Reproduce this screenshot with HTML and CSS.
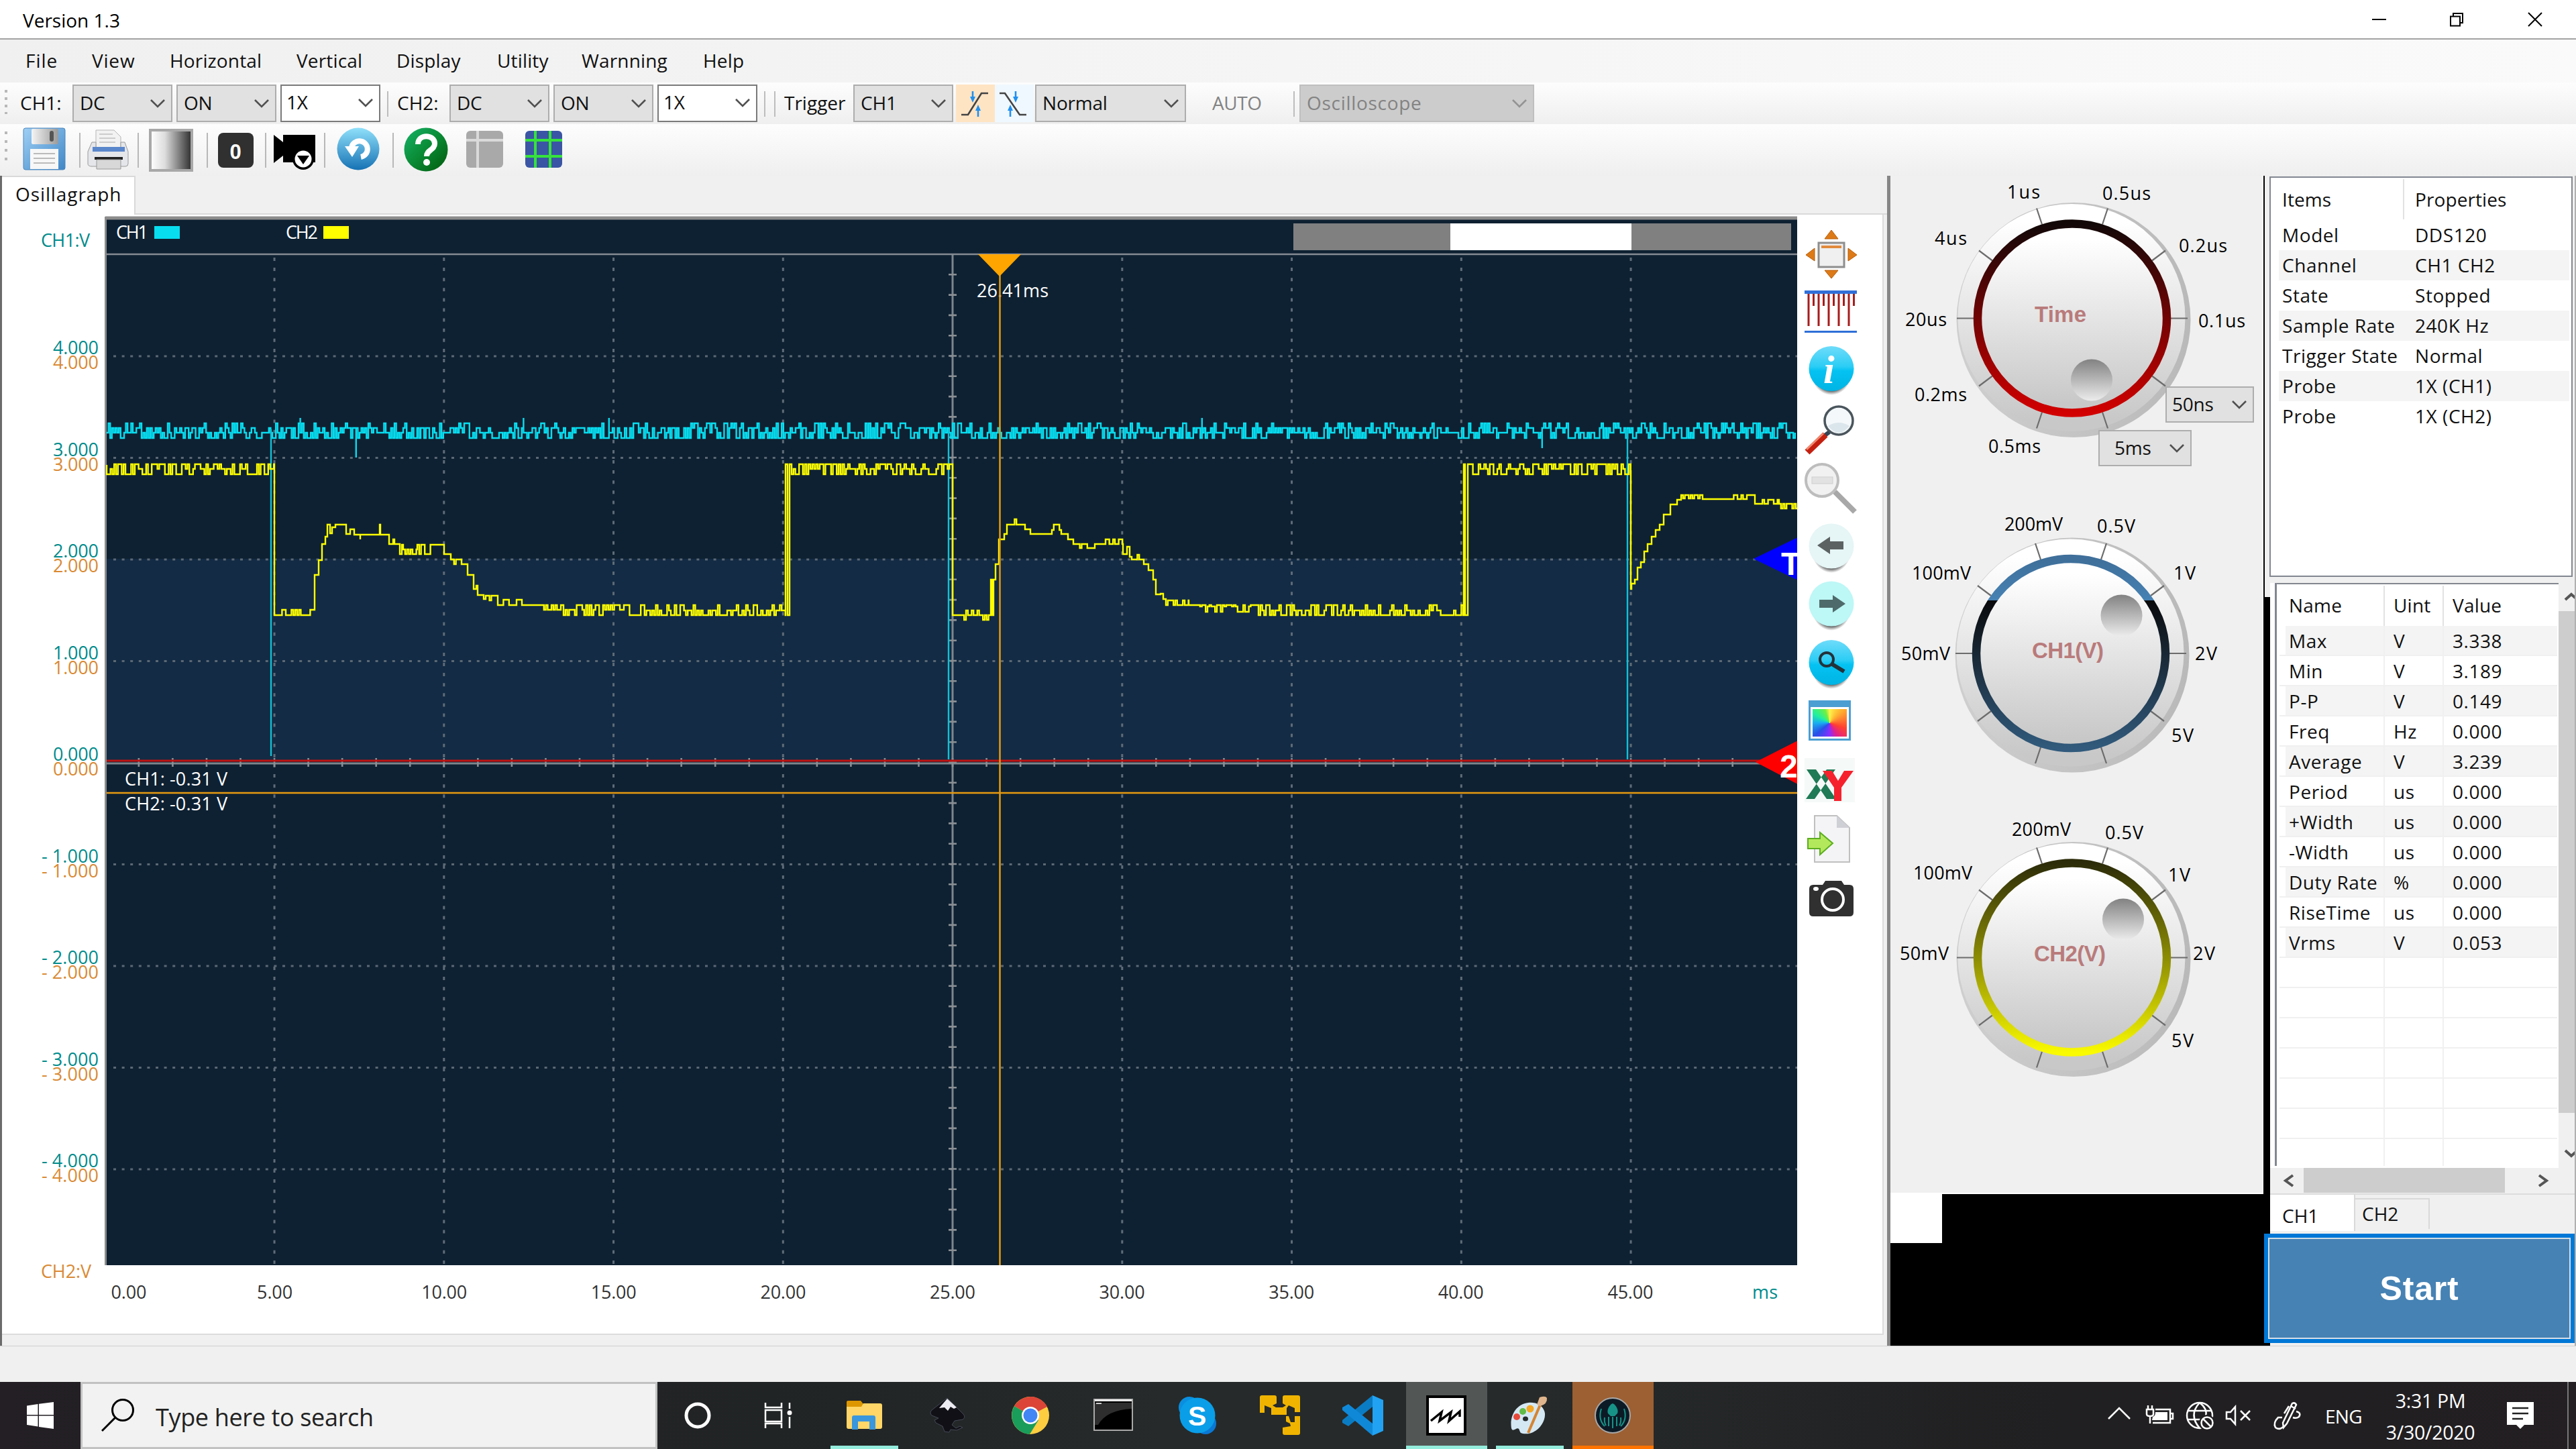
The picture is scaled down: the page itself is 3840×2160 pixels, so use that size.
FILE: index.html
```html
<!DOCTYPE html>
<html lang="en">
<head>
<meta charset="utf-8">
<title>Version 1.3</title>
<link rel="stylesheet" href="styles.css">
</head>
<body>
<svg width="0" height="0" class="defs">
  <defs>
    <symbol id="chev" viewBox="0 0 24 16"><path d="M2 3l10 10L22 3" fill="none" stroke="#505050" stroke-width="2.6"/></symbol>
    <linearGradient id="gFloppy" x1="0" y1="0" x2="1" y2="1"><stop offset="0" stop-color="#9fd0f5"/><stop offset="1" stop-color="#3f86c6"/></linearGradient>
    <linearGradient id="gMetal" x1="0" y1="0" x2="1" y2="0"><stop offset="0" stop-color="#f4f4f4"/><stop offset="1" stop-color="#9a9a9a"/></linearGradient>
    <linearGradient id="gFade" x1="0" y1="0" x2="1" y2="0"><stop offset="0" stop-color="#fff"/><stop offset=".35" stop-color="#ddd"/><stop offset="1" stop-color="#2c2c2c"/></linearGradient>
    <linearGradient id="gBlue" x1="0" y1="0" x2="0" y2="1"><stop offset="0" stop-color="#8fe0fa"/><stop offset="1" stop-color="#1672b4"/></linearGradient>
    <linearGradient id="gGreen" x1="0" y1="0" x2="1" y2="1"><stop offset="0" stop-color="#16b36a"/><stop offset=".5" stop-color="#0a8a34"/><stop offset="1" stop-color="#005a0c"/></linearGradient>
    <linearGradient id="gCyan" x1="0" y1="0" x2="0" y2="1"><stop offset="0" stop-color="#6fdcfa"/><stop offset=".45" stop-color="#2ccdf5"/><stop offset=".55" stop-color="#04c2f2"/><stop offset="1" stop-color="#00b4e4"/></linearGradient>
    <radialGradient id="gShadow"><stop offset=".8" stop-color="#5a5a5a"/><stop offset="1" stop-color="#777" stop-opacity="0"/></radialGradient>
    <linearGradient id="gKnob" x1="0" y1="0" x2="0" y2="1"><stop offset=".08" stop-color="#fff"/><stop offset=".95" stop-color="#c8c8c8"/></linearGradient>
    <linearGradient id="gRim" x1="0" y1="0" x2="1" y2="0"><stop offset="0" stop-color="#cfcfcf"/><stop offset="1" stop-color="#b9b9b9"/></linearGradient>
    <linearGradient id="gDot" x1="0" y1="0" x2="0" y2="1"><stop offset="0" stop-color="#828282"/><stop offset="1" stop-color="#ececec"/></linearGradient>
    <linearGradient id="gRed" x1="0" y1="0" x2="0" y2="1"><stop offset="0" stop-color="#120808"/><stop offset="1" stop-color="#d20000"/></linearGradient>
    <linearGradient id="gSteel" x1="0" y1="0" x2="0" y2="1"><stop offset="0" stop-color="#3f6f9a"/><stop offset=".22" stop-color="#4682b4"/><stop offset=".22" stop-color="#0a0a0c"/><stop offset="1" stop-color="#315a7c"/></linearGradient>
    <linearGradient id="gYel" x1="0" y1="0" x2="0" y2="1"><stop offset="0" stop-color="#2c2c0a"/><stop offset=".5" stop-color="#8c8c04"/><stop offset="1" stop-color="#fafa00"/></linearGradient>
    <g id="knob">
      <ellipse cx="2" cy="2.5" rx="174.500" ry="175" fill="url(#gRim)"/>
      <circle cx="-1" cy="-1" r="169.500" fill="url(#gKnob)"/>
      <circle r="141" fill="url(#gKnob)"/>
      <path d="M147 0H172M-147 0H-172M119 -86L139 -101M119 86L139 101M-119 -86L-139 -101M-119 86L-139 101M45 -140L53 -164M-45 -140L-53 -164M45 140L53 164M-45 140L-53 164" stroke="#6c6c6c" stroke-width="2.2"/>
    </g>
  </defs>
</svg>

<header class="titlebar">
  <span>Version 1.3</span>
  <svg class="winbtns" viewBox="3520 0 320 58"><g fill="none" stroke="#000" stroke-width="2"><path d="M3536 29h21"/><path d="M3653 24.500h14v14h-14zM3657 24v-4h14v14h-4"/><path d="M3769 19l20 20M3789 19l-20 20"/></g></svg>
</header>

<nav class="menu">
  <span>File</span><span>View</span><span>Horizontal</span><span>Vertical</span><span>Display</span><span>Utility</span><span>Warnning</span><span>Help</span>
</nav>

<div class="bar bar1">
  <i class="grip"></i>
  <span class="lbl ch">CH1:</span>
  <div class="combo w149">DC<svg><use href="#chev"/></svg></div>
  <div class="combo w149">ON<svg><use href="#chev"/></svg></div>
  <div class="combo w149 edit">1X<svg><use href="#chev"/></svg></div>
  <i class="sep s1"></i>
  <span class="lbl ch">CH2:</span>
  <div class="combo w149">DC<svg><use href="#chev"/></svg></div>
  <div class="combo w149">ON<svg><use href="#chev"/></svg></div>
  <div class="combo w149 edit">1X<svg><use href="#chev"/></svg></div>
  <i class="sep s1"></i><i class="sep s2"></i>
  <span class="lbl trig">Trigger</span>
  <div class="combo w149 last">CH1<svg><use href="#chev"/></svg></div>
  <div class="edge rise"><svg viewBox="0 0 58 56"><path d="M8 45h10L38 13h10" fill="none" stroke="#444" stroke-width="2.6"/><path d="M25 10v10M33 48V38" stroke="#2090f0" stroke-width="2.600"/><path d="M21 18h8l-4 9zM29 39h8l-4-9z" fill="#2090f0"/></svg></div>
  <div class="edge fall"><svg viewBox="0 0 58 56"><path d="M7 13h8l22 32h10" fill="none" stroke="#444" stroke-width="2.6"/><path d="M31 10v10M23 48V38" stroke="#2090f0" stroke-width="2.600"/><path d="M27 18h8l-4 9zM19 39h8l-4-9z" fill="#2090f0"/></svg></div>
  <div class="combo w225">Normal<svg><use href="#chev"/></svg></div>
  <span class="lbl auto">AUTO</span>
  <i class="sep s3"></i>
  <div class="combo w350 off">Oscilloscope<svg><use href="#chev"/></svg></div>
</div>

<div class="bar bar2">
  <svg class="tools" viewBox="0 185 860 77">
    <g fill="#b8b8b8"><path d="M7 196h4v4h-4zM7 209h4v4h-4zM7 222h4v4h-4zM7 235h4v4h-4z"/><path d="M118 198h2v52h-2zM205 198h2v52h-2zM308 198h2v52h-2zM395 198h2v52h-2zM483 198h2v52h-2zM585 198h2v52h-2z"/></g>
    <g><rect x="35" y="191" width="62" height="62" rx="3" fill="url(#gFloppy)" stroke="#4a86bd"/><rect x="47" y="192" width="40" height="23" rx="2" fill="url(#gMetal)"/><rect x="74" y="195" width="6" height="16" rx="3" fill="#555"/><path d="M45 222h42v30H45z" fill="#f7f7f7"/><path d="M50 229h32M50 236h32M50 243h32" stroke="#bbb" stroke-width="2"/></g>
    <g><path d="M143 194h27l10 10v18h-37z" fill="#f2f2f2" stroke="#b5b5b5"/><path d="M148 200h20M148 206h24M148 212h24" stroke="#ccc" stroke-width="2"/><path d="M137 212h6v8h37v-8h6l5 14v18q0 4-4 4h-50q-6 0-6-4v-18z" fill="#e4e6ea" stroke="#9a9a9a"/><path d="M138 219h48v7h-48z" fill="#5a86cc"/><path d="M141 234h42v4h-42z" fill="#222"/><path d="M144 238h36v14h-36z" fill="#d8d8d8" stroke="#999"/></g>
    <rect x="224" y="194" width="62" height="60" fill="url(#gFade)" stroke="#a8a8a8" stroke-width="4"/>
    <rect x="325" y="198" width="53" height="52" rx="8" fill="#303030"/><text x="342.500" y="237" class="ico" font-size="31" fill="#fff">0</text>
    <g><path d="M408 201l14 11v-11h48v41h-48v-10l-14 11z"/><circle cx="452" cy="237" r="16"/><circle cx="452" cy="237" r="12.500" fill="#fff"/><path d="M443 232h18l-9 13z"/></g>
    <g><circle cx="534" cy="222" r="31.500" fill="url(#gBlue)"/><path d="M524 220a12 12 0 1 1 14 14" fill="none" stroke="#fff" stroke-width="8"/><path d="M514 218h21l-10 16z" fill="#fff"/></g>
    <g><circle cx="635" cy="223" r="32.500" fill="url(#gGreen)"/><path d="M623 215c0-16 25-15 25-1 0 10-12 9-12 19" fill="none" stroke="#fff" stroke-width="8"/><circle cx="636" cy="242" r="5" fill="#fff"/></g>
    <g><rect x="695" y="195" width="55" height="55" rx="6" fill="#a9a9a9"/><path d="M712 195v55M695 209h55" stroke="#dadada" stroke-width="4"/></g>
    <g><rect x="783" y="195" width="55" height="55" rx="6" fill="#3b55a5"/><path d="M798 195v55M820 195v55M783 209h55M783 233h55" stroke="#35e23b" stroke-width="4"/></g>
  </svg>
</div>

<main class="work">
  <section class="scope">
    <div class="tabs"><span class="tab">Osillagraph</span></div>
    <div class="page">
      <svg class="plot" viewBox="4 320 2675 1668" id="plot">
        <rect x="157" y="323" width="2522" height="1563" fill="#0e2132"/>
        <path d="M157 325h2522" stroke="#8c8c8c" stroke-width="5"/>
        <path d="M157.500 323v1563" stroke="#8c8c8c" stroke-width="3"/>
        <rect x="159" y="833" width="2520" height="302" fill="#132b44"/>
        <g id="grid"></g>
        <path d="M159 379h2520" stroke="#858b92" stroke-width="2.500"/>
        <g class="t" fill="#fff">
          <text x="173" y="356" textLength="48">CH1</text><rect x="230" y="337" width="38" height="19" fill="#08ddf0"/>
          <text x="426" y="356" textLength="48">CH2</text><rect x="482" y="337" width="38" height="19" fill="#ff0"/>
        </g>
        <path d="M1928 333h742v40h-742z" fill="#808080"/><path d="M2162 333h270v40h-270z" fill="#fff"/>
        <path id="ch1" class="tr" stroke="#08ddf0"/>
        <path d="M404 640V1127M1414 640V1132M2426 640V1132" class="tr" stroke="#12c0d6"/>
        <path id="ch2" class="tr" stroke="#ff0"/>
        <path d="M159 1134h2520" stroke="#c01212" stroke-width="3"/>
        <g class="t" fill="#fff"><text x="186" y="1171" textLength="153">CH1: -0.31 V</text><text x="186" y="1208" textLength="153">CH2: -0.31 V</text><text x="1456" y="443" textLength="107">26.41ms</text></g>
        <path d="M159 1182h2520M1490.500 379V1886" stroke="#e69a10" stroke-width="2.500"/>
        <path d="M1458 379h64l-32 33z" fill="#ffa500"/>
        <path d="M2680 801v64l-66-32z" fill="#00f"/><path d="M2680 1104v65l-63-33z" fill="#f00"/>
        <g class="mk" fill="#fff"><text x="2655" y="857">T</text><text x="2653" y="1159">2</text></g>
        <g class="t" id="labels"><text x="61" y="368" fill="#008b8b" textLength="73">CH1:V</text><text x="61" y="1905" fill="#d98a35" textLength="75">CH2:V</text><text x="2612" y="1936" fill="#008b8b" textLength="38">ms</text></g>
      </svg>
      <div class="icons">
        <svg viewBox="2690 340 78 78"><path d="M2730 343l10 13h-20zM2730 415l10-12h-20zM2692 380l13-10v19zM2768 380l-13-10v19z" fill="#dd7a18" stroke="#b85c08"/><rect x="2711" y="362" width="38" height="36" fill="#f0f0f0" stroke="#8e8e8e" stroke-width="3"/><path d="M2715 368h30" stroke="#e08a3c" stroke-width="4"/></svg>
        <svg viewBox="2690 428 78 78"><path d="M2690 435.500h78" stroke="#2f6fd8" stroke-width="5"/><path d="M2690 494.500h78" stroke="#2f6fd8" stroke-width="3"/><path d="M2696 438v48M2711 438v48M2726 438v48M2741 438v48M2756 438v48M2703.500 438v18M2718.500 438v18M2733.500 438v18M2748.500 438v18M2763.500 438v18" stroke="#a81c1c" stroke-width="3"/></svg>
        <svg viewBox="2690 515 78 78"><ellipse cx="2730" cy="556" rx="30" ry="33" fill="url(#gShadow)"/><circle cx="2730" cy="549.500" r="33.500" fill="url(#gCyan)"/><text x="2718" y="571" class="serif" fill="#fff">i</text></svg>
        <svg viewBox="2690 600 78 78"><path d="M2727 641l-8 6" stroke="#345" stroke-width="6"/><path d="M2694 671l27-26" stroke="#c42010" stroke-width="10"/><path d="M2693 667l25-24" stroke="#f08a70" stroke-width="3"/><circle cx="2741" cy="624" r="21" fill="#f4f8fa" stroke="#4a555c" stroke-width="3.500"/><path d="M2725 632q16-10 32 0-16 20-32 0z" fill="#dbe6ec"/></svg>
        <svg viewBox="2690 688 78 78"><path d="M2735 731l30 30" stroke="#a8a8a8" stroke-width="8"/><circle cx="2716" cy="714" r="24" fill="#f1f1f1" stroke="#bdbdbd" stroke-width="4"/><rect x="2701" y="709" width="31" height="10" fill="#e2e2e2" stroke="#cfcfcf"/></svg>
        <svg viewBox="2690 776 78 78"><ellipse cx="2730" cy="819" rx="29" ry="33" fill="url(#gShadow)"/><circle cx="2730" cy="812" r="33.500" fill="#e6f5f5"/><path d="M2709 811l19-13v7h20v12h-20v7z" fill="#5c6262"/></svg>
        <svg viewBox="2690 864 78 78"><ellipse cx="2730" cy="906" rx="29" ry="33" fill="url(#gShadow)"/><circle cx="2730" cy="899" r="33.500" fill="#bdf7f6"/><path d="M2751 899l-19-13v7h-20v12h20v7z" fill="#4f6a6a"/></svg>
        <svg viewBox="2690 952 78 78"><ellipse cx="2730" cy="993" rx="30" ry="33" fill="url(#gShadow)"/><circle cx="2730" cy="986.500" r="33.500" fill="url(#gCyan)"/><circle cx="2723" cy="982" r="10" fill="none" stroke="#23323a" stroke-width="4"/><path d="M2731 989l18 11" stroke="#23323a" stroke-width="6"/></svg>
        <div class="palette"><i></i></div>
        <svg viewBox="2690 1122 78 78"><rect x="2690" y="1126" width="75" height="66" fill="#f5f9f8"/><path d="M2693 1143h14l30 44h-14zM2736 1143h-13l-31 44h13z" fill="#1f7a55"/><path d="M2717 1145h14l9 15 9-15h14l-18 25v20h-11v-20z" fill="#f5222d"/></svg>
        <svg viewBox="2690 1213 78 78"><path d="M2705 1216h33l19 18v51h-52z" fill="#f4f4f6" stroke="#c0c0c0" stroke-width="2"/><path d="M2738 1216v18h19z" fill="#cfcfd6"/><path d="M2695 1250h18v-9l19 16-19 17v-9h-18z" fill="#b4e85c" stroke="#5cae20" stroke-width="2"/></svg>
        <svg viewBox="2690 1301 78 78"><path d="M2697 1325q0-6 6-6h14l4-6h24l4 6h8q6 0 6 6v35q0 6-6 6h-54q-6 0-6-6z" fill="#303030"/><circle cx="2732" cy="1341" r="16" fill="none" stroke="#fff" stroke-width="4"/><ellipse cx="2707" cy="1325" rx="4" ry="3" fill="#fff"/></svg>
      </div>
    </div>
  </section>

  <section class="knobs">
    <div class="panel">
      <svg viewBox="2818 262 556 1518">
        <use href="#knob" x="3089" y="474.500"/><circle cx="3089" cy="474.500" r="141" fill="none" stroke="url(#gRed)" stroke-width="12.500"/><circle cx="3118" cy="566.500" r="31" fill="url(#gDot)"/>
        <use href="#knob" x="3087" y="974"/><circle cx="3087" cy="974" r="141" fill="none" stroke="url(#gSteel)" stroke-width="12.500"/><circle cx="3162.500" cy="917.500" r="31" fill="url(#gDot)"/>
        <use href="#knob" x="3089" y="1427.500"/><circle cx="3089" cy="1427.500" r="141" fill="none" stroke="url(#gYel)" stroke-width="12.500"/><circle cx="3165" cy="1370.500" r="31" fill="url(#gDot)"/>
        <g class="kn"><text x="3033" y="480" textLength="77">Time</text><text x="3029" y="981" textLength="107">CH1(V)</text><text x="3032" y="1433" textLength="107">CH2(V)</text></g>
        <g class="t">
          <text x="2992" y="296" textLength="49">1us</text><text x="3134" y="298" textLength="72">0.5us</text><text x="3248" y="376" textLength="72">0.2us</text><text x="2884" y="365" textLength="48">4us</text><text x="2840" y="486" textLength="62">20us</text><text x="3277" y="488" textLength="70">0.1us</text><text x="2854" y="598" textLength="78">0.2ms</text><text x="2964" y="675" textLength="78">0.5ms</text>
          <text x="2988" y="791" textLength="87">200mV</text><text x="3126" y="794" textLength="57">0.5V</text><text x="2850" y="864" textLength="88">100mV</text><text x="3240" y="864" textLength="33">1V</text><text x="2834" y="984" textLength="73">50mV</text><text x="3272" y="984" textLength="33">2V</text><text x="3237" y="1106" textLength="33">5V</text>
          <text x="2999" y="1246" textLength="88">200mV</text><text x="3138" y="1251" textLength="57">0.5V</text><text x="2852" y="1311" textLength="88">100mV</text><text x="3232" y="1314" textLength="33">1V</text><text x="2832" y="1431" textLength="73">50mV</text><text x="3269" y="1431" textLength="33">2V</text><text x="3237" y="1561" textLength="33">5V</text>
        </g>
      </svg>
      <div class="combo over ns">50ns<svg><use href="#chev"/></svg></div>
      <div class="combo over ms">5ms<svg><use href="#chev"/></svg></div>
    </div>
    <div class="void"><i></i></div>
  </section>

  <aside class="side">
    <div class="props">
      <div class="r h"><span>Items</span><span>Properties</span></div>
      <div class="r"><span>Model</span><span>DDS120</span></div>
      <div class="r alt"><span>Channel</span><span>CH1 CH2</span></div>
      <div class="r"><span>State</span><span>Stopped</span></div>
      <div class="r alt"><span>Sample Rate</span><span>240K Hz</span></div>
      <div class="r"><span>Trigger State</span><span>Normal</span></div>
      <div class="r alt"><span>Probe</span><span>1X (CH1)</span></div>
      <div class="r"><span>Probe</span><span>1X (CH2)</span></div>
    </div>
    <div class="meas">
      <div class="list">
        <div class="m h"><span>Name</span><span>Uint</span><span>Value</span></div>
        <div class="m alt"><span>Max</span><span>V</span><span>3.338</span></div>
        <div class="m"><span>Min</span><span>V</span><span>3.189</span></div>
        <div class="m alt"><span>P-P</span><span>V</span><span>0.149</span></div>
        <div class="m"><span>Freq</span><span>Hz</span><span>0.000</span></div>
        <div class="m alt"><span>Average</span><span>V</span><span>3.239</span></div>
        <div class="m"><span>Period</span><span>us</span><span>0.000</span></div>
        <div class="m alt"><span>+Width</span><span>us</span><span>0.000</span></div>
        <div class="m"><span>-Width</span><span>us</span><span>0.000</span></div>
        <div class="m alt"><span>Duty Rate</span><span>%</span><span>0.000</span></div>
        <div class="m"><span>RiseTime</span><span>us</span><span>0.000</span></div>
        <div class="m alt"><span>Vrms</span><span>V</span><span>0.053</span></div>
        <div class="m"><span></span><span></span><span></span></div>
        <div class="m"><span></span><span></span><span></span></div>
        <div class="m"><span></span><span></span><span></span></div>
        <div class="m"><span></span><span></span><span></span></div>
        <div class="m"><span></span><span></span><span></span></div>
        <div class="m"><span></span><span></span><span></span></div>
        <div class="m"><span></span><span></span><span></span></div>
      </div>
      <svg class="vs" viewBox="3815 869 24 872"><path fill="#cdcdcd" d="M3815 911h24v748h-24z"/><path d="M3825 894l9-8 9 8M3825 1715l9 8 9-8" fill="none" stroke="#555" stroke-width="4"/></svg>
    </div>
    <svg class="hs" viewBox="3392 1741 447 38"><path fill="#cdcdcd" d="M3435 1741h300v37h-300z"/><path d="M3419 1752l-11 8 11 8M3786 1752l11 8-11 8" fill="none" stroke="#555" stroke-width="4"/></svg>
    <div class="chtabs"><span class="on">CH1</span><span>CH2</span></div>
    <button class="start">Start</button>
  </aside>
</main>
<div class="status"></div>

<footer class="taskbar">
  <div class="win"><svg viewBox="0 0 40 40"><path d="M0 5.500L16.500 3v16H0zM18 2.800L40 0v19H18zM0 20.500h16.500v16L0 34zM18 20.500h22V40l-22-3z" fill="#fff"/></svg></div>
  <div class="search"><svg viewBox="0 0 50 50"><circle cx="32" cy="17" r="15.500" fill="none" stroke="#000" stroke-width="3"/><path d="M21 28L1 48" stroke="#000" stroke-width="3"/></svg><span>Type here to search</span></div>
  <svg class="apps" viewBox="980 2060 1500 100">
    <circle cx="1040" cy="2110" r="17" fill="none" stroke="#fff" stroke-width="5"/>
    <g fill="none" stroke="#fff" stroke-width="2.500"><path d="M1141 2091v7h24v-7M1141 2102h24v17h-24zM1141 2129v-7h24v7M1177 2091v9M1177 2112v17"/></g><circle cx="1177" cy="2106" r="3.500" fill="#fff"/>
    <g><path d="M1262 2090q0-2 2-2h19l4 5v10h-25z" fill="#dd9700"/><path d="M1262 2097h22l3-5h25q3 0 3 3v32q0 3-3 3h-47q-3 0-3-3z" fill="#ffd667"/><path d="M1270 2131v-18q0-3 3-3h29q3 0 3 3v18h-9v-12h-17v12z" fill="#3a96dd"/></g>
    <g><path d="M1412 2084l24 24q4 5-1 8l-12 2-4 6 6 5 6-3 4 2-9 4-9-1-2 4-7-1-3-8-10-5-2-4 6-3-10-4q-4-4 0-8z" fill="#101016" stroke="#444956"/><path d="M1412 2085l14 13-4 2-5-3-4 6-5-5-8 1z" fill="#ececf2"/></g>
    <g><circle cx="1536" cy="2110" r="28" fill="#ffcd40"/><path d="M1536 2110L1512 2096a28 28 0 0 1 49 1z" fill="#db4437"/><path d="M1512 2096a28 28 0 0 0 23 42l13-21-12-7z" fill="#1a9d5a"/><circle cx="1536" cy="2110" r="13" fill="#fff"/><circle cx="1536" cy="2110" r="10.500" fill="#4285f4"/></g>
    <g><path d="M1631 2086h57v46h-57z" fill="#000" stroke="#a9a9a9" stroke-width="2"/><path d="M1632 2086h55v3h-55z" fill="#e8e8e8"/><path d="M1632 2091h55v9q-38 2-50 24h-5z" fill="#2e2e2e"/><path d="M1634 2092h8" stroke="#ccc" stroke-width="2"/></g>
    <g><circle cx="1773" cy="2098" r="16" fill="#0a8fe0"/><circle cx="1797" cy="2122" r="16" fill="#0a78d4"/><circle cx="1785" cy="2110" r="26.500" fill="#0a9ee8"/><text x="1771" y="2125" class="ico" font-size="41" fill="#fff">S</text></g>
    <path d="M1881 2080h19q3 0 3 3v9l-6 3 5 3h10l5-3-5-3v-9q0-3 3-3h20q3 0 3 3v22h-8v-6l-9-4-3 4v10h-23v-10l-10-4v11h-7v-23q0-3 3-3zM1917 2111h4l3 9h6v-9h8v25q0 3-3 3h-20q-3 0-3-3v-8l12-2-1-4-6-3z" fill="#f0b400"/>
    <g><path d="M2046 2080l16 7v46l-16 7z" fill="#22a2f2"/><path d="M2046 2080v17l-36 29-9-5v-4z" fill="#0a7cc4"/><path d="M2046 2140v-18l-36-29-9 5v4z" fill="#1088d8"/></g>
    <path d="M2096 2060h121v100h-121z" fill="#525655"/><path d="M2128 2082h56v56h-56z" fill="#fff" stroke="#000" stroke-width="4"/><path d="M2133 2109l15-4-4 13 20-13-6 13 20-13-1 5" fill="none"/><path d="M2133 2118l16-13-3 13 17-13-3 13 16-14v8" fill="none" stroke="#000" stroke-width="3.500"/>
    <g><path d="M2278 2091c-18 2-28 20-25 38 2 7 8-2 11 1 2 3 1 6 6 7 18 3 34-14 33-30-1-10-12-18-25-16z" fill="#d4e8f4"/><ellipse cx="2274" cy="2115" rx="4" ry="3.500" fill="#252a2a"/><circle cx="2261" cy="2112" r="5" fill="#e84a3a"/><circle cx="2270" cy="2104" r="5" fill="#62bb46"/><circle cx="2281" cy="2100" r="5.500" fill="#f5a623"/><path d="M2296 2094l-18 42" stroke="#d58432" stroke-width="4"/><path d="M2291 2094l4-11q9-3 11 1 1 9-10 12z" fill="#e0b48c"/></g>
    <path d="M2344 2060h121v100h-121z" fill="#9c6033"/><circle cx="2404" cy="2110" r="26" fill="#0c1a26" stroke="#a8a8a8" stroke-width="2"/><path d="M2404 2092c-6 3-9 11-7 15l4 4h6l4-4c2-4-1-12-7-15z" fill="#179287"/><path d="M2398 2112v14M2410 2112v14M2392 2113q-1 7 2 12M2416 2113q1 7-2 12M2387 2100q-5 16 5 26M2421 2100q5 16-5 26M2404 2112v17" fill="none" stroke="#179287" stroke-width="2"/>
    <path d="M1238 2155h101v5h-101zM2096 2155h121v5h-121zM2230 2155h101v5h-101z" fill="#93ecdc"/><path d="M2344 2155h121v5h-121z" fill="#ff7300"/>
  </svg>
  <div class="tray">
    <svg class="trayic" viewBox="3140 2060 295 100"><g fill="none" stroke="#fff" stroke-width="2.500">
      <path d="M3143 2115l16-16 16 16"/>
      <path d="M3213 2101h22v20h-26M3235 2107h4v8h-4M3202 2095v5M3208 2095v5M3200 2101h10v7q0 3-5 3t-5-3zM3205 2111v11"/><path d="M3213 2105h18v12h-23l1-5q4-1 4-7z" fill="#fff" stroke="none"/>
      <circle cx="3279" cy="2110" r="19"/><path d="M3262 2103h35M3262 2116h20M3279 2091q-17 18 0 38M3279 2091q12 9 9 20"/><circle cx="3290" cy="2121" r="12" fill="#211f21" stroke="none"/><circle cx="3290" cy="2121" r="8.500"/><path d="M3284 2115l12 12"/>
      <path d="M3319 2105h6l7-8v26l-7-8h-6zM3340 2103l14 14M3354 2103l-14 14"/>
      <path d="M3403 2121l14-29q4-2 6 2l-14 28-5 6zM3415 2096l7 4M3405 2107l7-11M3402 2113h-6q-8 8-4 15 7 5 13-3M3423 2104q8 2 4 8-4 3-9 1"/></g></svg>
    <span class="eng">ENG</span>
    <span class="clock"><b>3:31 PM</b><b>3/30/2020</b></span>
    <svg class="note" viewBox="0 0 40 40"><path d="M0 0h40v34H26l-6 6-6-6H0z" fill="#fff"/><path d="M8 9h24M8 17h24M8 25h16" stroke="#222" stroke-width="2.500"/></svg>
    <i class="peek"></i>
  </div>
</footer>
<script src="scope.js"></script>
</body>
</html>
```
FILE: styles.css
```css
* { box-sizing: border-box; }
body { margin: 0; width: 3840px; height: 2160px; overflow: hidden; background: #f0f0f0; font-family: "Open Sans", "Noto Sans", sans-serif; font-size: 28px; color: #111; display: flex; flex-direction: column; }
svg { display: block; flex: none; }
.defs { position: absolute; }
text { font-family: "Open Sans", sans-serif; }

.titlebar { height: 59px; background: #fff; border-bottom: 2px solid #a3a3a3; display: flex; align-items: center; justify-content: space-between; padding-left: 34px; color: #000; }
.titlebar span { padding-top: 2px; }
.winbtns { width: 320px; height: 58px; }

.menu { height: 64px; padding: 0 0 2px 38px; background: linear-gradient(90deg, #f0f0f0, #fafafa); display: grid; grid-template-columns: 99px 116px 189px 149px 150px 126px 181px 100px; align-items: center; letter-spacing: .15px; }
.menu span:nth-child(1) { letter-spacing: 1px; }
.menu span:nth-child(2) { letter-spacing: .8px; }

.bar { background: linear-gradient(#fdfdfd, #efefef); display: flex; }
.bar1 { height: 62px; padding-top: 3px; }
.bar2 { height: 77px; }
.grip { width: 4px; height: 36px; margin: 8px 19px 0 7px; background: repeating-linear-gradient(#b8b8b8 0 4px, transparent 4px 11px); }
.lbl { line-height: 54px; white-space: nowrap; }
.ch { width: 78px; }
.trig { width: 103px; }
.auto { width: 121px; color: #838383; letter-spacing: -.4px; }
.combo { height: 56px; border: 2px solid #adadad; background: #e1e1e1; display: flex; align-items: center; justify-content: space-between; padding: 0 8px 2px 9px; margin-right: 6px; letter-spacing: -.2px; }
.combo svg { width: 24px; height: 16px; margin-top: 2px; }
.edit { background: #fff; border-color: #7a7a7a; margin-right: 10px; padding: 0 8px 4px 7px; }
.w149 { width: 149px; }
.last { margin-right: 4px; }
.w225 { width: 225px; margin-right: 39px; margin-left: 2px; }
.w350 { width: 350px; }
.off { background: #ccc; border-color: #bfbfbf; color: #838383; letter-spacing: .7px; }
.off svg { opacity: .45; }
.sep { width: 2px; height: 38px; margin-top: 10px; background: #bdbdbd; }
.s1 { margin-right: 13px; }
.s2 { margin-right: 13px; }
.s3 { margin-right: 7px; }
.edge { width: 58px; height: 56px; }
.edge svg { width: 58px; height: 56px; }
.rise { background: #ffe4c4; }
.fall { background: #f0f8ff; }
.tools { width: 860px; height: 77px; }
.ico { font-family: "Liberation Sans", sans-serif; font-weight: bold; }
.serif { font: italic bold 60px "Liberation Serif", serif; }

.work { height: 1744px; display: flex; }
.scope { width: 2813px; border-left: 3px solid #6b6b6b; display: flex; flex-direction: column; }
.tabs { height: 58px; border-bottom: 2px solid #d9d9d9; }
.tab { display: block; width: 199px; height: 58px; background: #fff; border: 2px solid #d9d9d9; border-width: 2px 2px 0 0; padding-left: 20px; line-height: 50px; letter-spacing: .9px; }
.page { width: 2805px; height: 1670px; background: #fff; border: 2px solid #dcdcdc; border-top: 0; border-left: 0; display: flex; padding-left: 1px; }
.plot { width: 2675px; height: 1668px; }
.t text { font-size: 27px; }
.mk text { font-family: "Liberation Sans", sans-serif; font-weight: bold; font-size: 48px; }
.kn text { font-family: "Liberation Sans", sans-serif; font-weight: bold; font-size: 33px; fill: #b97b7b; }
.tr { fill: none; stroke-width: 2.4; }
.icons { width: 78px; margin-left: 11px; padding-top: 20px; display: flex; flex-direction: column; gap: 9.5px; }
.icons svg { width: 78px; height: 78px; }
.palette { width: 63px; height: 60px; margin: 4px 0 12px 6px; border: 3px solid #4b9ed2; border-top: 10px solid #4b9ed2; background: #fff; padding: 3px; }
.palette i { display: block; height: 41px; background: conic-gradient(from 0deg, #fff24a, #ffb030 45deg, #ff4030 110deg, #e0208c 150deg, #8a2cff 180deg, #2850e8 230deg, #18b0f0 270deg, #20f0a0 300deg, #70f040 340deg, #fff24a); }

.knobs { width: 561px; border-left: 5px solid #868686; display: flex; flex-direction: column; }
.panel { position: relative; height: 1518px; border-right: 2px solid #fff; border-bottom: 2px solid #fff; }
.panel > svg { width: 556px; height: 1518px; }
.over { position: absolute; height: 54px; margin: 0; }
.ns { left: 410px; top: 314px; width: 132px; padding: 0 8px 2px 8px; }
.ms { left: 310px; top: 379px; width: 139px; padding: 0 8px 2px 22px; }
.void { flex: 1; background: #000; }
.void i { display: block; width: 77px; height: 73px; background: #fff; }

.side { width: 466px; border-left: 2px solid #000; padding-left: 7px; border-right: 2px solid #b0b0b0; display: flex; flex-direction: column; background: linear-gradient(90deg, #000 8px, transparent 8px) 0 628px no-repeat, #f0f0f0; }
.props { width: 452px; height: 597px; margin-top: 1px; border: 2px solid #828790; background: #fff; padding-left: 12px; flex: none; }
.r { display: grid; grid-template-columns: 198px 1fr; height: 45px; width: 433px; align-items: center; padding: 0 0 2px 5px; letter-spacing: .55px; }
.r.h { height: 63px; letter-spacing: .1px; padding-bottom: 0; }
.r.h span { height: 60px; line-height: 60px; }
.r.h span:first-child { width: 182px; border-right: 2px solid #e2e2e2; }
.alt { background: #f4f4f4; }
.meas { height: 872px; margin-top: 9px; display: flex; flex: none; background: #fff; padding-left: 7px; margin-left: 1px; }
.list { width: 423px; border-left: 3px solid #828790; border-top: 2px solid #828790; padding-left: 4px; height: 869px; overflow: hidden; }
.m { display: grid; grid-template-columns: 157px 88px 1fr; height: 45px; line-height: 45px; border-bottom: 2px solid #f0f0f0; letter-spacing: .55px; width: 414px; background: #fff; }
.m span { padding-left: 14px; border-right: 2px solid #f0f0f0; }
.m span:nth-child(n+2) { padding-left: 13px; }
.m span:last-child { border: 0; }
.m.alt { background: linear-gradient(90deg, #fff 9px, #f4f4f4 9px); }
.m.h { height: 62px; line-height: 58px; border: 0; padding-top: 2px; letter-spacing: .2px; }
.m.h span { border-color: #e2e2e2; }
.vs { width: 24px; height: 872px; background: #f0f0f0; }
.hs { width: 447px; height: 38px; margin-left: 8px; }
.chtabs { height: 60px; margin-left: 1px; border-top: 2px solid #dcdcdc; display: flex; }
.chtabs span { width: 111px; height: 46px; margin-top: 5px; border: 2px solid #d9d9d9; border-width: 2px 2px 0 0; padding-left: 10px; line-height: 43px; }
.chtabs .on { width: 127px; height: 54px; margin: 0; background: #fff; border-width: 0 2px 0 0; padding-left: 18px; line-height: 62px; }
.start { margin: 0 0 0 -8px; width: 463px; height: 163px; border: 6px solid #0078d7; background: #4682b4; box-shadow: inset 0 0 0 2px #d5dde5; color: #fff; font: bold 50px "Liberation Sans", sans-serif; letter-spacing: .8px; padding: 0; flex: none; }

.status { height: 54px; border-top: 1px solid #cfcfcf; background: #f0f0f0; }

.taskbar { height: 100px; background: linear-gradient(90deg, #231f24, #212425 30%, #262a2a 45%, #262a2a 60%, #201f21 80%, #231f22); display: flex; color: #fff; }
.win { width: 120px; padding: 30px 40px; }
.win svg { width: 40px; height: 40px; }
.search { width: 860px; border: 3px solid #c2c2c2; background: #f2f2f2; display: flex; align-items: center; padding-left: 28px; color: #222; }
.search svg { width: 50px; height: 50px; }
.search span { margin-left: 31px; font-size: 36px; letter-spacing: -.35px; padding-top: 4px; }
.apps { width: 1500px; height: 100px; }
.tray { flex: 1; display: flex; padding-left: 660px; }
.trayic { width: 295px; height: 100px; }
.eng { width: 86px; margin-left: 31px; line-height: 102px; letter-spacing: -.7px; }
.clock { width: 170px; display: flex; flex-direction: column; align-items: center; padding-top: 5px; margin-left: -14px; }
.clock b { font-weight: normal; line-height: 47px; font-size: 28.5px; letter-spacing: -.3px; }
.note { width: 40px; height: 40px; margin: 30px 50px 0 29px; }
.peek { width: 2px; background: #777; }
```
FILE: scope.js
```javascript
// Graticule, axis labels and the two channel traces.
(function () {
  var seed = 20203;
  function rnd() { seed = (seed * 1103515245 + 12345) % 2147483648; return seed / 2147483648; }
  function pick(a) { return a[Math.floor(rnd() * a.length)]; }

  var g = '', i, x, y;
  for (i = 1; i < 10; i++) {
    x = 156.3 + 252.75 * i;
    if (i === 5) continue;
    g += '<path d="M' + x + ' 384V1886" stroke="#5f6c78" stroke-width="3" stroke-dasharray="5 10.1"/>';
  }
  for (i = -4; i <= 4; i++) {
    if (i === 0) continue;
    y = 1137 - 151.5 * i;
    g += '<path d="M169 ' + y + 'H2679" stroke="#5b6874" stroke-width="3.2" stroke-dasharray="4 8.6"/>';
  }
  g += '<path d="M1420 379V1886M159 1138H2679" stroke="#7d858c" stroke-width="3"/>';
  var t = '';
  for (i = 1; i < 50; i++) t += 'M' + (156.3 + 50.55 * i) + ' 1130v13';
  for (i = 1; i < 50; i++) t += 'M1414 ' + (379 + 30.3 * i) + 'h12';
  g += '<path d="' + t + '" stroke="#8a8f94" stroke-width="2.6"/>';
  document.getElementById('grid').innerHTML = g;

  var l = '';
  for (i = 4; i >= -4; i--) {
    y = 1137 - 151.5 * i;
    var s = (i < 0 ? '- ' : '') + Math.abs(i) + '.000', w = i < 0 ? 85 : 68, lx = 147 - w;
    l += '<text x="' + lx + '" y="' + (y - 3) + '" fill="#008b8b" textLength="' + w + '">' + s + '</text>';
    l += '<text x="' + lx + '" y="' + (y + 19) + '" fill="#d98a35" textLength="' + w + '">' + s + '</text>';
  }
  for (i = 0; i < 10; i++) {
    x = i === 0 ? 192 : 157 + 252.6 * i;
    l += '<text x="' + x + '" y="1936" fill="#333" text-anchor="middle" textLength="' + (i < 2 ? 53 : 68) + '">' + (i * 5) + '.00</text>';
  }
  document.getElementById('labels').innerHTML += l;

  // CH1 idles near 3.2 V with a few isolated spikes.
  var up = [448, 783, 909, 1793], dn = { 531: 682, 2299: 668 }, d = 'M159 645';
  for (x = 159; x < 2677; x += 2.6) {
    d += 'H' + x.toFixed(1) + 'V' + pick([631, 638, 638, 645, 645, 653, 653]);
    up.forEach(function (u) { if (u >= x && u < x + 2.6) d += 'V623V645'; });
    Object.keys(dn).forEach(function (u) { if (+u >= x && +u < x + 2.6) d += 'V' + dn[u] + 'V638'; });
  }
  document.getElementById('ch1').setAttribute('d', d);

  d = 'M159 693';
  function noise(a, b, lv) { for (var p = a; p < b; p += 2.8) d += 'H' + p.toFixed(1) + 'V' + pick(lv); d += 'H' + b; }
  function steps(a) { a.forEach(function (p) { d += 'H' + p[0] + 'V' + p[1]; }); }
  var hi = [692, 692, 699, 707, 707], lo = [902, 910, 917, 917];
  noise(159, 409, hi);
  steps([[409, 917]]); noise(412, 469, [917, 917, 909]);
  steps([[469, 857], [475, 835], [480, 811], [485, 800], [488, 782], [492, 795], [495, 786], [500, 782], [516, 796], [522, 789], [528, 797], [537, 804]]);
  noise(537, 556, [797, 804, 797]); steps([[556, 797], [566, 782], [567, 797], [580, 811], [586, 804], [588, 811], [596, 826], [599, 812]]);
  noise(601, 622, [819, 826, 826]); noise(622, 662, [812, 812, 826]);
  steps([[662, 826], [672, 834]]); noise(674, 692, [834, 841]);
  steps([[692, 841], [697, 857], [706, 878], [710, 873], [712, 887], [721, 893]]);
  noise(724, 742, [888, 895]); noise(742, 778, [894, 902, 902]); d += 'V902'; noise(808, 840, [902, 902, 909]);
  noise(840, 930, [902, 909, 917]); noise(930, 1171, lo);
  d += 'V692H1174V917H1177V692'; noise(1180, 1419, hi);
  steps([[1420, 917]]); noise(1426, 1475, [917, 917, 917, 910, 924]);
  steps([[1477, 864], [1479, 917], [1481, 864], [1484, 841], [1489, 804], [1497, 796], [1501, 782]]);
  noise(1504, 1526, [774, 782, 782]); steps([[1528, 789], [1536, 796]]); d += 'H1568'; noise(1568, 1586, [782, 790, 796]);
  steps([[1588, 796], [1592, 804], [1600, 811]]); noise(1604, 1634, [811, 811, 817]); noise(1634, 1674, [811, 811, 804]);
  steps([[1674, 826], [1680, 815], [1684, 830]]); noise(1687, 1703, [827, 834]);
  steps([[1705, 841], [1712, 850], [1719, 864], [1723, 886], [1730, 885], [1734, 893]]);
  noise(1738, 1772, [895, 902]); d += 'V902'; noise(1786, 1866, [902, 902, 904, 904, 912]); noise(1876, 2182, lo);
  d += 'V692H2184V917H2188V692'; noise(2190, 2431, hi);
  steps([[2431, 878], [2432, 870], [2437, 864], [2441, 846], [2446, 838], [2451, 822], [2456, 811], [2462, 800], [2468, 790], [2474, 782], [2480, 767], [2490, 752], [2500, 745]]);
  noise(2506, 2538, [738, 738, 743]); d += 'V744H2576'; noise(2576, 2612, [738, 744]); noise(2616, 2652, [745, 751]); noise(2652, 2679, [751, 751, 758]);
  document.getElementById('ch2').setAttribute('d', d);
})();
```
